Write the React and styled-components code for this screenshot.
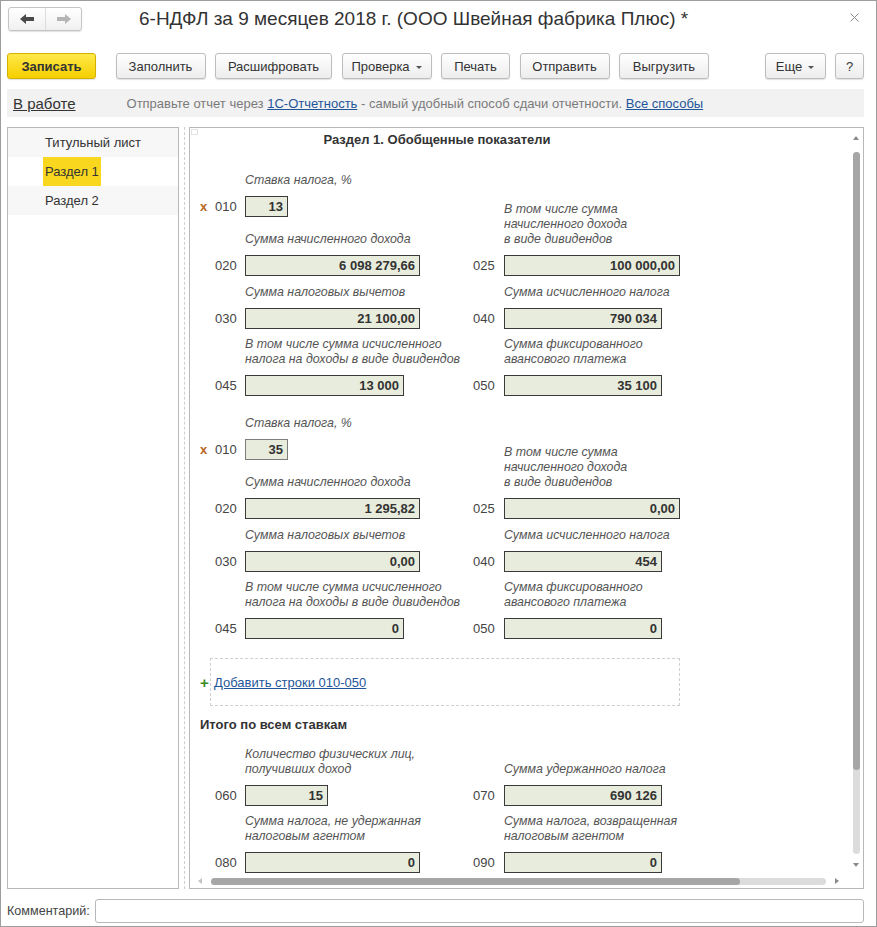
import React from 'react'
import styled, { createGlobalStyle } from 'styled-components'

const Global = createGlobalStyle`
  html, body { margin: 0; padding: 0; background: #fff; }
  body { font-family: "Liberation Sans", Arial, sans-serif; color: #333; }
  * { box-sizing: border-box; }
`

const Window = styled.div`
  width: 877px;
  height: 927px;
  border: 1px solid #9d9d9d;
  padding: 6px 12px 0 6px;
  display: flex;
  flex-direction: column;
  background: #fff;
`

const Header = styled.div`
  display: flex;
  align-items: center;
  height: 24px;
`

const NavGroup = styled.div`
  display: flex;
  margin-left: 1px;
  height: 24px;
  border: 1px solid #c4c4c4;
  border-radius: 3px;
  background: linear-gradient(#ffffff, #f0f0f0);
  box-shadow: 0 1px 1px rgba(0, 0, 0, 0.12);
`

const NavButton = styled.div`
  width: 36px;
  display: flex;
  align-items: center;
  justify-content: center;
  & + & { border-left: 1px solid #dcdcdc; }
`

const Title = styled.div`
  margin-left: 57px;
  font-size: 19px;
  color: #333;
  white-space: nowrap;
`

const Close = styled.div`
  margin-left: auto;
  margin-right: 5px;
  margin-top: -4px;
  display: flex;
`

const Toolbar = styled.div`
  display: flex;
  align-items: center;
  gap: 9.5px;
  margin-top: 22px;
  height: 26px;
`

const Button = styled.div`
  width: ${p => p.$w}px;
  height: 26px;
  display: flex;
  align-items: center;
  justify-content: center;
  font-size: 13px;
  color: #333;
  border: 1px solid ${p => (p.$primary ? '#d2b100' : '#bdbdbd')};
  border-radius: 3px;
  background: ${p =>
    p.$primary ? 'linear-gradient(#ffe94a, #f6cf00)' : 'linear-gradient(#ffffff, #ededed)'};
  box-shadow: 0 1px 1px rgba(0, 0, 0, 0.12);
  font-weight: ${p => (p.$primary ? 'bold' : 'normal')};
  margin-left: ${p => p.$ml || 0}px;
  white-space: nowrap;
`

const Caret = styled.span`
  display: inline-block;
  margin-left: 6px;
  margin-top: 2px;
  border-left: 3px solid transparent;
  border-right: 3px solid transparent;
  border-top: 3px solid #555;
`

const InfoBar = styled.div`
  margin-top: 10px;
  height: 28px;
  background: #f2f2f2;
  display: flex;
  align-items: center;
  padding-left: 6px;
  white-space: nowrap;
`

const Status = styled.span`
  font-size: 15px;
  color: #333;
  text-decoration: underline;
`

const InfoText = styled.span`
  margin-left: 51px;
  font-size: 13px;
  color: #7a7a7a;
`

const Link = styled.a`
  color: #1f5699;
  text-decoration: underline;
  cursor: pointer;
`

const Main = styled.div`
  margin-top: 10px;
  height: 762px;
  display: flex;
`

const LeftPanel = styled.div`
  width: 172px;
  border: 1px solid #b8b8b8;
`

const NavItem = styled.div`
  height: 29px;
  display: flex;
  align-items: stretch;
  padding-left: 35px;
  background: ${p => (p.$shaded ? '#f7f7f7' : '#fff')};
  font-size: 13px;
  color: #333;
`

const NavText = styled.span`
  display: flex;
  align-items: center;
  padding: 0 2px;
  background: ${p => (p.$active ? '#f9d71f' : 'transparent')};
`

const Splitter = styled.div`
  width: 10px;
  display: flex;
  justify-content: center;
  &::before {
    content: '';
    border-left: 1px dashed #cfcfcf;
  }
`

const RightPanel = styled.div`
  flex: 1;
  border: 1px solid #b8b8b8;
  display: grid;
  grid-template-columns: 1fr 14px;
  grid-template-rows: 1fr 14px;
  position: relative;
`

const CornerMark = styled.div`
  position: absolute;
  left: 1px;
  top: 1px;
  width: 7px;
  height: 6px;
  border: 1px solid #e2e2e2;
`

const Content = styled.div`
  overflow: hidden;
  padding: 4px 0 0 8px;
`

const SectionTitle = styled.div`
  width: 478px;
  text-align: center;
  font-size: 13px;
  font-weight: bold;
  line-height: 16px;
  color: #333;
`

const Group = styled.div`
  display: grid;
  grid-template-columns: 17px 30px 228px 31px 1fr;
  grid-template-rows: ${p => p.$rows};
  row-gap: 8px;
  margin-top: ${p => p.$mt}px;
`

const Label = styled.div`
  grid-column: ${p => p.$col};
  grid-row: ${p => p.$row};
  align-self: end;
  font-size: 12.4px;
  font-style: italic;
  line-height: 15px;
  color: #555;
  white-space: nowrap;
`

const Marker = styled.div`
  grid-column: 1;
  grid-row: ${p => p.$row};
  padding-left: 2px;
  font-size: 13px;
  font-weight: bold;
  line-height: 21px;
  color: #b8661c;
`

const Code = styled.div`
  grid-column: ${p => p.$col};
  grid-row: ${p => p.$row};
  font-size: 13px;
  line-height: 21px;
  color: #444;
`

const FieldBox = styled.div`
  grid-column: ${p => p.$col};
  grid-row: ${p => p.$row};
  width: ${p => p.$w}px;
  height: 21px;
  border: 1px solid ${p => (p.$soft ? '#7d7d7d' : '#3a3a3a')};
  background: #e8ecdc;
  font-size: 13px;
  font-weight: bold;
  line-height: 19px;
  text-align: right;
  padding-right: 4px;
  color: #333;
`

const AddRow = styled.div`
  margin-top: 19px;
  display: flex;
  align-items: center;
  padding-left: 2px;
`

const Plus = styled.span`
  width: 10px;
  font-size: 15px;
  font-weight: bold;
  color: #3d8a1f;
`

const AddBox = styled.div`
  width: 470px;
  height: 48px;
  border: 1px dashed #cfcfcf;
  display: flex;
  align-items: center;
  padding-left: 3px;
  font-size: 13px;
`

const Subtitle = styled.div`
  margin-top: 11px;
  padding-left: 2px;
  font-size: 13px;
  font-weight: bold;
  line-height: 16px;
  color: #333;
`

const VScroll = styled.div`
  grid-column: 2;
  grid-row: 1;
  display: flex;
  flex-direction: column;
  align-items: center;
  padding: 8px 0 7px;
`

const HScroll = styled.div`
  grid-column: 1;
  grid-row: 2;
  display: flex;
  align-items: center;
  padding: 0 10px 0 8px;
`

const Track = styled.div`
  flex: 1;
  display: flex;
  flex-direction: ${p => (p.$vertical ? 'column' : 'row')};
  background: #dcdcdc;
  border-radius: 4px;
  ${p => (p.$vertical ? 'width: 7px; margin: 12px 0 9px;' : 'height: 7px; margin: 0 9px;')}
`

const Thumb = styled.div`
  background: #a6a6a6;
  border-radius: 4px;
  ${p => (p.$vertical ? `height: ${p.$size}%;` : `width: ${p.$size}%;`)}
`

const Arrow = styled.span`
  width: 0;
  height: 0;
  ${p => {
    const c = '#8a8a8a'
    if (p.$dir === 'up') return `border-left:3px solid transparent;border-right:3px solid transparent;border-bottom:4px solid ${c};`
    if (p.$dir === 'down') return `border-left:3px solid transparent;border-right:3px solid transparent;border-top:4px solid ${c};`
    if (p.$dir === 'left') return `border-top:3px solid transparent;border-bottom:3px solid transparent;border-right:4px solid #c4c4c4;`
    return `border-top:3px solid transparent;border-bottom:3px solid transparent;border-left:4px solid ${c};`
  }}
`

const CommentRow = styled.div`
  margin-top: 10px;
  height: 24px;
  display: flex;
  align-items: center;
`

const CommentLabel = styled.span`
  font-size: 12.6px;
  color: #444;
`

const CommentInput = styled.div`
  flex: 1;
  height: 24px;
  margin-left: 5px;
  border: 1px solid #b8b8b8;
  border-radius: 3px;
`

const cols = { left: { code: 2, box: 3 }, right: { code: 4, box: 5 } }

const rateGroup = (v, soft) => [
  { label: ['Ставка налога, %'], side: 'left', row: 1 },
  { code: '010', side: 'left', row: 2, w: 43, value: v[0], marker: true, soft },
  { label: ['В том числе сумма', 'начисленного дохода', 'в виде дивидендов'], side: 'right', row: '2 / span 2' },
  { label: ['Сумма начисленного дохода'], side: 'left', row: 3 },
  { code: '020', side: 'left', row: 4, w: 175, value: v[1] },
  { code: '025', side: 'right', row: 4, w: 176, value: v[2] },
  { label: ['Сумма налоговых вычетов'], side: 'left', row: 5 },
  { label: ['Сумма исчисленного налога'], side: 'right', row: 5 },
  { code: '030', side: 'left', row: 6, w: 175, value: v[3] },
  { code: '040', side: 'right', row: 6, w: 158, value: v[4] },
  { label: ['В том числе сумма исчисленного', 'налога на доходы в виде дивидендов'], side: 'left', row: 7 },
  { label: ['Сумма фиксированного', 'авансового платежа'], side: 'right', row: 7 },
  { code: '045', side: 'left', row: 8, w: 159, value: v[5] },
  { code: '050', side: 'right', row: 8, w: 158, value: v[6] },
]

const totals = [
  { label: ['Количество физических лиц,', 'получивших доход'], side: 'left', row: 1 },
  { label: ['Сумма удержанного налога'], side: 'right', row: 1 },
  { code: '060', side: 'left', row: 2, w: 83, value: '15' },
  { code: '070', side: 'right', row: 2, w: 158, value: '690 126' },
  { label: ['Сумма налога, не удержанная', 'налоговым агентом'], side: 'left', row: 3 },
  { label: ['Сумма налога, возвращенная', 'налоговым агентом'], side: 'right', row: 3 },
  { code: '080', side: 'left', row: 4, w: 175, value: '0' },
  { code: '090', side: 'right', row: 4, w: 158, value: '0' },
]

function FormGroup({ items, rows, mt }) {
  return (
    <Group $rows={rows} $mt={mt}>
      {items.map((it, i) =>
        it.label ? (
          <Label key={i} $col={cols[it.side].box} $row={it.row}>
            {it.label.map(l => <div key={l}>{l}</div>)}
          </Label>
        ) : (
          <React.Fragment key={i}>
            {it.marker && <Marker $row={it.row}>x</Marker>}
            <Code $col={cols[it.side].code} $row={it.row}>{it.code}</Code>
            <FieldBox $col={cols[it.side].box} $row={it.row} $w={it.w} $soft={it.soft}>
              {it.value}
            </FieldBox>
          </React.Fragment>
        )
      )}
    </Group>
  )
}

const ArrowIcon = ({ dir, color }) => (
  <svg width="14" height="10" viewBox="0 0 14 10" style={{ transform: dir === 'right' ? 'scaleX(-1)' : 'none' }}>
    <path d="M0 5 L6 0 L6 3 L14 3 L14 7 L6 7 L6 10 Z" fill={color} />
  </svg>
)

export default function App() {
  const rowsMain = '16px 21px 22px 21px 16px 21px 30px 21px'
  return (
    <>
      <Global />
      <Window>
        <Header>
          <NavGroup>
            <NavButton><ArrowIcon dir="left" color="#4a4a4a" /></NavButton>
            <NavButton><ArrowIcon dir="right" color="#b4b4b4" /></NavButton>
          </NavGroup>
          <Title>6-НДФЛ за 9 месяцев 2018 г. (ООО Швейная фабрика Плюс) *</Title>
          <Close>
            <svg width="9" height="9" viewBox="0 0 9 9">
              <path d="M0.5 0.5 L8.5 8.5 M8.5 0.5 L0.5 8.5" stroke="#8c8c8c" strokeWidth="1" />
            </svg>
          </Close>
        </Header>

        <Toolbar>
          <Button $primary $w={89}>Записать</Button>
          <Button $w={90} $ml={10}>Заполнить</Button>
          <Button $w={117}>Расшифровать</Button>
          <Button $w={90}>Проверка<Caret /></Button>
          <Button $w={69}>Печать</Button>
          <Button $w={90}>Отправить</Button>
          <Button $w={90}>Выгрузить</Button>
          <Button $w={61} style={{ marginLeft: 'auto' }}>Еще<Caret /></Button>
          <Button $w={29}>?</Button>
        </Toolbar>

        <InfoBar>
          <Status>В работе</Status>
          <InfoText>
            Отправьте отчет через <Link>1С-Отчетность</Link> - самый удобный способ сдачи отчетности.{' '}
            <Link>Все способы</Link>
          </InfoText>
        </InfoBar>

        <Main>
          <LeftPanel>
            <NavItem $shaded><NavText>Титульный лист</NavText></NavItem>
            <NavItem><NavText $active>Раздел 1</NavText></NavItem>
            <NavItem $shaded><NavText>Раздел 2</NavText></NavItem>
          </LeftPanel>
          <Splitter />
          <RightPanel>
            <CornerMark />
            <Content>
              <SectionTitle>Раздел 1. Обобщенные показатели</SectionTitle>
              <FormGroup
                mt={24}
                rows={rowsMain}
                items={rateGroup(['13', '6 098 279,66', '100 000,00', '21 100,00', '790 034', '13 000', '35 100'])}
              />
              <FormGroup
                mt={19}
                rows={rowsMain}
                items={rateGroup(['35', '1 295,82', '0,00', '0,00', '454', '0', '0'], true)}
              />
              <AddRow>
                <Plus>+</Plus>
                <AddBox><Link>Добавить строки 010-050</Link></AddBox>
              </AddRow>
              <Subtitle>Итого по всем ставкам</Subtitle>
              <FormGroup mt={12} rows="32px 21px 30px 21px" items={totals} />
            </Content>
            <VScroll>
              <Arrow $dir="up" />
              <Track $vertical>
                <Thumb $vertical $size={88} />
              </Track>
              <Arrow $dir="down" />
            </VScroll>
            <HScroll>
              <Arrow $dir="left" />
              <Track>
                <Thumb $size={86} />
              </Track>
              <Arrow $dir="right" />
            </HScroll>
          </RightPanel>
        </Main>

        <CommentRow>
          <CommentLabel>Комментарий:</CommentLabel>
          <CommentInput />
        </CommentRow>
      </Window>
    </>
  )
}
